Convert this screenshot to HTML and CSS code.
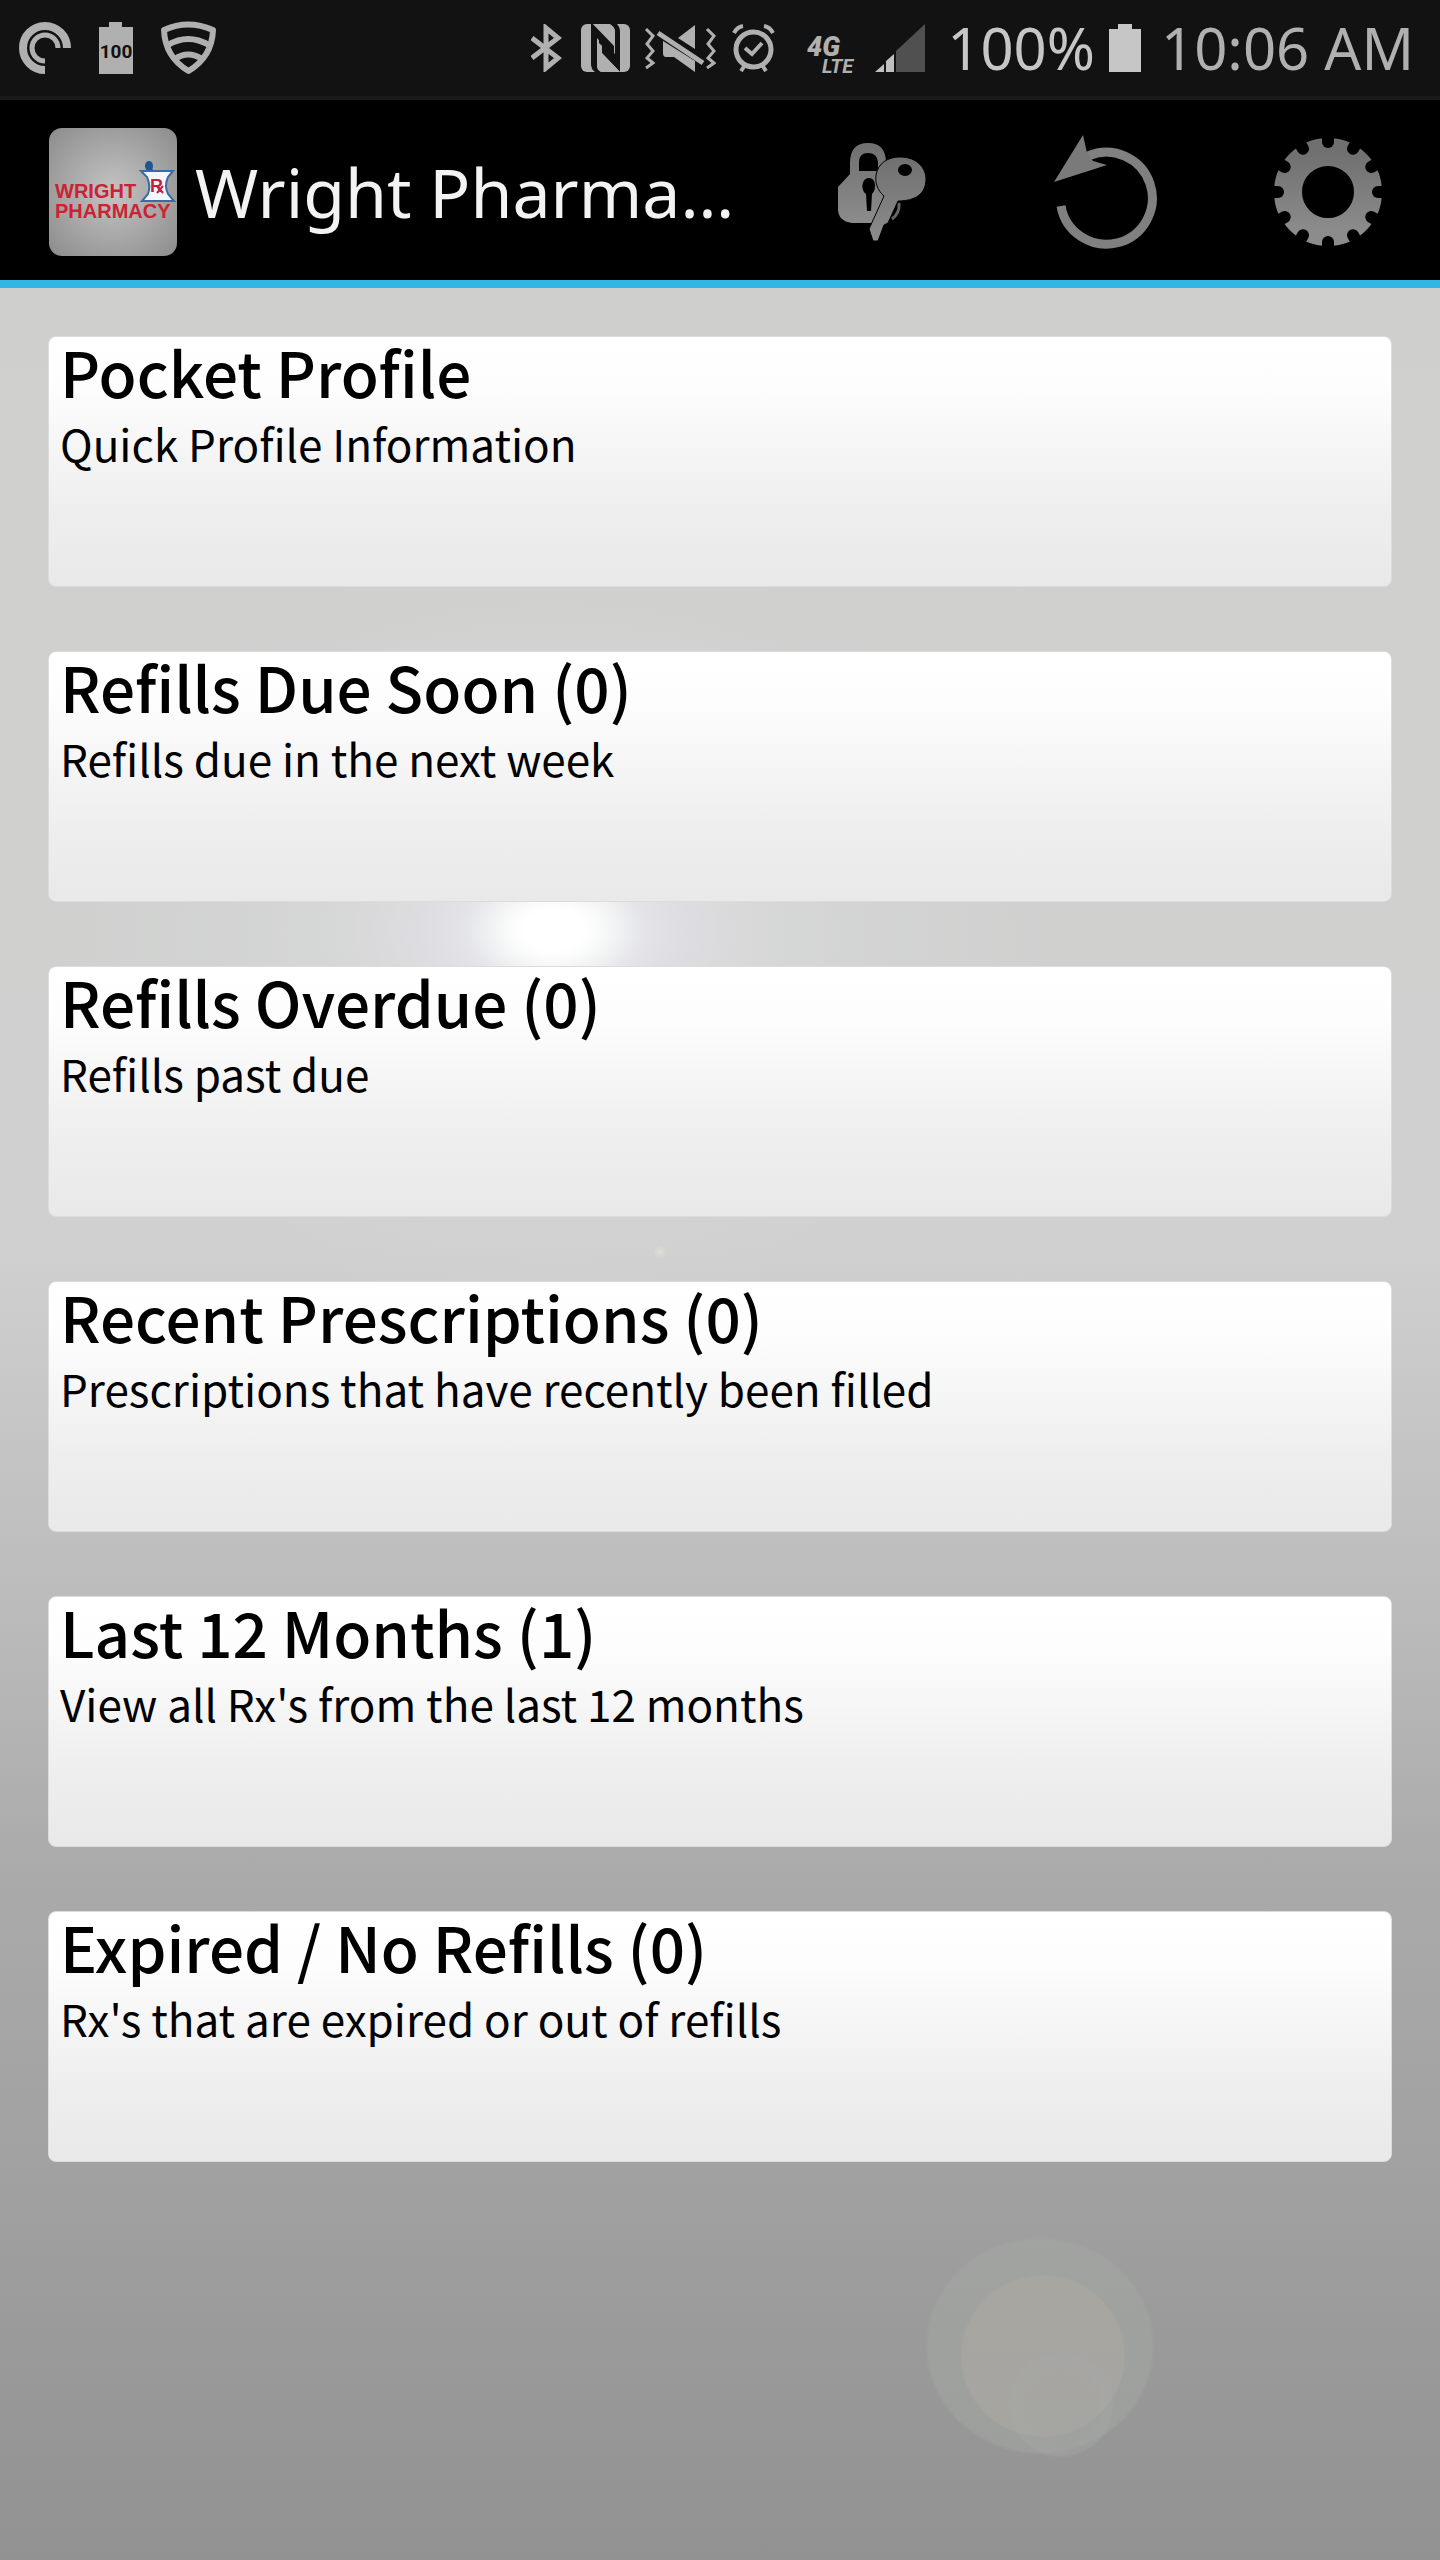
FILE: index.html
```html
<!DOCTYPE html>
<html lang="en">
<head>
  <meta charset="UTF-8">
  <meta name="viewport" content="width=device-width, initial-scale=1">
  <title>Wright Pharmacy</title>
  <link rel="stylesheet" href="styles.css">
</head>

<body>
  <div class="status-bar">
    <div class="notifications">
      <svg class="icon-casts" width="52" height="52" viewBox="0 0 52 52" fill="none" stroke="#b0b0b0">
        <path d="M26 48A22 22 0 1 1 48 26" stroke-width="8"/>
        <path d="M26 39A13 13 0 1 1 39 26" stroke-width="5"/>
      </svg>
      <svg class="icon-full" width="34" height="52" viewBox="0 0 34 52" fill="#b0b0b0">
        <path d="M10 0h13v5h11v47H0V5h10z"/>
        <text x="17" y="36" text-anchor="middle" class="battery-text">100</text>
      </svg>
      <svg width="55" height="54" viewBox="0 0 55 54" fill="none" stroke="#b0b0b0" stroke-width="6" stroke-linejoin="round">
        <path d="M3 9Q27 -2 52 9Q51 36 27.500 50Q4 36 3 9z"/>
        <path d="M7 24Q27 12 48 24M14 38Q27 29 41 38"/>
      </svg>
    </div>
    <div class="system">
      <svg width="32" height="48" viewBox="0 0 32 48" fill="none" stroke="#b0b0b0" stroke-width="5">
        <path d="M1 14L27 34L15 44V4L27 14L1 34"/>
      </svg>
      <svg class="icon-nfc" width="49" height="48" viewBox="0 0 49 48">
        <rect width="49" height="48" rx="6" fill="#b0b0b0"/>
        <path d="M12 0L34 22V8Q34 3 29 0H36Q39 3 39 8V48L16 24V41Q16 46 20 48H14Q10 45 10 40V0z" fill="#121212"/>
        <path d="M16 14L34 32V8Q34 3 28 0H12L33 22V32L16 14z" fill="#b0b0b0"/>
        <path d="M16 14V41Q16 48 22 48H39L21 29V20z" fill="#b0b0b0"/>
        <path d="M18 14L34 30V34L18 19z" fill="#121212"/>
      </svg>
      <svg class="icon-mute" width="72" height="48" viewBox="0 0 72 48" fill="#b0b0b0">
        <path d="M34 14L51 1V25zM19 17L51 37V48L30 33H22Q19 33 19 29z"/>
        <path d="M14 9L59 39" stroke="#b0b0b0" stroke-width="5"/>
        <path d="M2 5L9 12L3 20L9 27L3 34L9 39L2 44M63 5L70 12L64 20L70 27L64 34L70 39L63 44" fill="none" stroke="#b0b0b0" stroke-width="3"/>
      </svg>
      <svg class="icon-alarm" width="43" height="48" viewBox="0 0 43 48" fill="none" stroke="#b0b0b0">
        <circle cx="21.500" cy="25.500" r="17.500" stroke-width="5"/>
        <path d="M13 24L20 30L30 19" stroke-width="4"/>
        <path d="M2 9Q5 3 11 2M41 9Q38 3 32 2M13 41L9 47M30 41L34 47" stroke-width="4"/>
      </svg>
      <svg class="icon-lte" width="48" height="48" viewBox="0 0 48 48" fill="#b0b0b0">
        <text x="0" y="32" class="net-gen">4G</text>
        <text x="15" y="49" class="net-type">LTE</text>
      </svg>
      <svg class="icon-signal" width="50" height="48" viewBox="0 0 50 48">
        <path d="M21 27L50 0V48H21z" fill="#505050"/>
        <path d="M0 48L9 40V48zM11 37L19 30V48H11z" fill="#c0c0c0"/>
      </svg>
      <span class="percent">100%</span>
      <svg class="icon-battery" width="32" height="48" viewBox="0 0 32 48" fill="#c6c6c6">
        <path d="M9 0h14v5h9v43H0V5h9z"/>
      </svg>
      <time class="clock">10:06 AM</time>
    </div>
  </div>

  <header class="app-bar">
    <svg class="logo" width="128" height="128" viewBox="0 0 128 128">
      <defs>
        <radialGradient id="logo-bg" r="0.7">
          <stop offset="0" stop-color="#c4c4c4"/>
          <stop offset="1" stop-color="#8c8c8c"/>
        </radialGradient>
      </defs>
      <rect width="128" height="128" rx="13" fill="url(#logo-bg)"/>
      <text x="6" y="70" class="logo-text">WRIGHT</text>
      <text x="6" y="90" class="logo-text">PHARMACY</text>
      <ellipse cx="100" cy="38" rx="4" ry="5" fill="#1f5590"/>
      <path d="M101 42L103 45" stroke="#1f5590" stroke-width="5"/>
      <path d="M92 43H124L119 49Q115 58 119 66L125 73H93L99 66Q102 58 98 49z" fill="#f2f7fd" stroke="#3a6ba8" stroke-width="2"/>
      <text x="101" y="64" class="logo-rx">R</text>
      <path d="M108 58L114 65M114 58L108 65" stroke="#c8203a" stroke-width="2"/>
    </svg>
    <h1>Wright Pharma…</h1>
    <div class="actions">
      <svg width="0" height="0" class="defs">
        <linearGradient id="metal" x1="0" y1="0" x2="0" y2="1">
          <stop offset="0" stop-color="#707070"/>
          <stop offset="1" stop-color="#8c8c8c"/>
        </linearGradient>
      </svg>
      <button type="button" aria-label="Lock">
        <svg width="100" height="98" viewBox="0 0 100 98">
          <path d="M12 31V20Q12 0 30 0Q48 0 48 20V40L54 46L36 80H14Q0 78 0 66V44L12 31zM21 28H40V19Q39 10 30 10Q21 10 21 19z" fill="url(#metal)" fill-rule="evenodd"/>
          <path d="M31 35C38 35 39 46 34 51L33 68H29L28 51C22 46 24 35 31 35z" fill="#000"/>
          <path d="M62 14C80 14 88 26 88 36C88 51 77 58 60 58L50 80L46 82L40 98H35L31 86L46 53C39 47 37 39 38 32C40 20 50 14 62 14z" fill="url(#metal)" stroke="#000" stroke-width="1"/>
          <ellipse cx="67" cy="27" rx="7" ry="6" fill="#000"/>
          <path d="M61 60Q62 70 54 76" fill="none" stroke="#666" stroke-width="3"/>
        </svg>
      </button>
      <button type="button" aria-label="Refresh">
        <svg width="104" height="114" viewBox="0 0 104 114">
          <path d="M7 71A46 46 0 1 0 34 21" fill="none" stroke="#808080" stroke-width="9"/>
          <path d="M29 0L33 18L39 26L53 30L0 47z" fill="#7a7a7a"/>
        </svg>
      </button>
      <button type="button" aria-label="Settings">
        <svg width="108" height="108" viewBox="0 0 108 108">
          <circle cx="54" cy="54" r="40" fill="none" stroke="url(#metal)" stroke-width="28"/>
          <g stroke="#000" stroke-width="12" stroke-linecap="round">
            <path id="notch" d="M54 -4V4"/>
            <use href="#notch" transform="rotate(30 54 54)"/>
            <use href="#notch" transform="rotate(60 54 54)"/>
            <use href="#notch" transform="rotate(90 54 54)"/>
            <use href="#notch" transform="rotate(120 54 54)"/>
            <use href="#notch" transform="rotate(150 54 54)"/>
            <use href="#notch" transform="rotate(180 54 54)"/>
            <use href="#notch" transform="rotate(210 54 54)"/>
            <use href="#notch" transform="rotate(240 54 54)"/>
            <use href="#notch" transform="rotate(270 54 54)"/>
            <use href="#notch" transform="rotate(300 54 54)"/>
            <use href="#notch" transform="rotate(330 54 54)"/>
          </g>
        </svg>
      </button>
    </div>
  </header>

  <main class="menu">
    <button type="button" class="card">
      <span class="card-title">Pocket Profile</span>
      <span class="card-text">Quick Profile Information</span>
    </button>
    <button type="button" class="card">
      <span class="card-title">Refills Due Soon (0)</span>
      <span class="card-text">Refills due in the next week</span>
    </button>
    <button type="button" class="card">
      <span class="card-title">Refills Overdue (0)</span>
      <span class="card-text">Refills past due</span>
    </button>
    <button type="button" class="card">
      <span class="card-title">Recent Prescriptions (0)</span>
      <span class="card-text">Prescriptions that have recently been filled</span>
    </button>
    <button type="button" class="card">
      <span class="card-title">Last 12 Months (1)</span>
      <span class="card-text">View all Rx's from the last 12 months</span>
    </button>
    <button type="button" class="card">
      <span class="card-title">Expired / No Refills (0)</span>
      <span class="card-text">Rx's that are expired or out of refills</span>
    </button>
  </main>
</body>
</html>
```
FILE: styles.css
```css
* {
  box-sizing: border-box;
}
body {
  margin: 0;
  min-height: 100vh;
  display: flex;
  flex-direction: column;
  font-family: 'Noto Sans', 'Open Sans', sans-serif;
  background: #999;
}
button {
  font: inherit;
  border: none;
  padding: 0;
  background: none;
  cursor: pointer;
}
svg {
  display: block;
  flex: none;
}

/* status bar */
.status-bar {
  display: flex;
  justify-content: space-between;
  height: 100px;
  padding: 0 26px 0 19px;
  background: #121212;
  border-bottom: 4px solid #1a1a1a;
}
.notifications,
.system {
  display: flex;
  align-items: center;
}
.notifications {
  gap: 28px;
}
.battery-text {
  font: bold 19px Roboto, sans-serif;
  fill: #121212;
}
.system {
  font-size: 58px;
  line-height: 96px;
  white-space: nowrap;
}
.icon-nfc {
  margin-left: 18px;
}
.icon-mute {
  margin-left: 14px;
}
.icon-alarm {
  margin-left: 16px;
}
.icon-lte {
  margin-left: 32px;
  overflow: visible;
}
.net-gen {
  font: italic 900 27px Roboto, sans-serif;
}
.net-type {
  font: italic bold 20px Roboto, sans-serif;
}
.icon-signal {
  margin-left: 20px;
}
.percent {
  margin-left: 22px;
  color: #c6c6c6;
}
.icon-battery {
  margin-left: 14px;
}
.clock {
  margin-left: 20px;
  color: #b0b0b0;
}

/* app bar */
.app-bar {
  display: flex;
  align-items: center;
  height: 188px;
  padding: 4px 58px 0 49px;
  background: #000;
  border-bottom: 8px solid #33b5e5;
}
.logo-text {
  font: bold 20px 'Liberation Sans', sans-serif;
  fill: #cc2233;
}
.logo-rx {
  font: bold 18px 'Liberation Sans', sans-serif;
  fill: #c8203a;
}
h1 {
  margin: 0 auto 0 18px;
  white-space: nowrap;
  font-size: 68px;
  font-weight: 400;
  line-height: 96px;
  color: #f3f3f3;
}
.actions {
  display: flex;
  align-items: center;
  gap: 116px;
}
.defs {
  position: absolute;
}

/* menu */
.menu {
  flex: 1;
  display: flex;
  flex-direction: column;
  gap: 64px;
  padding: 48px;
  background:
    radial-gradient(circle at 1061px 2117px, rgba(164, 166, 164, 0.3) 36px, rgba(166, 168, 168, 0.4) 50px, transparent 53px),
    radial-gradient(83px 82px at 1043px 2068px, rgba(172, 168, 162, 0.6) 97%, transparent 100%),
    radial-gradient(115px 109px at 1040px 2058px, rgba(162, 168, 162, 0.5) 97%, transparent 100%),
    radial-gradient(circle at 660px 964px, rgba(235, 230, 216, 0.6), transparent 7px),
    radial-gradient(300px 200px at 554px 642px, #fff 10%, rgba(250, 252, 251, 0.9) 17%, rgba(232, 232, 238, 0.75) 30%, rgba(226, 224, 230, 0.6) 45%, rgba(220, 220, 220, 0.3) 70%, transparent 100%),
    radial-gradient(500px 380px at 554px 642px, rgba(218, 220, 220, 0.8), transparent),
    linear-gradient(#cfcfcd 0, #d0d0d0 900px, #d0d0d0 960px, #bebebe 1270px, #aaaaaa 1590px, #a1a1a1 1890px, #959595 2180px, #929292 2272px);
}
.card {
  display: flex;
  flex-direction: column;
  align-items: flex-start;
  height: 251px;
  padding: 0 11px;
  text-align: left;
  font-family: 'Noto Sans CJK SC', 'Noto Sans', sans-serif;
  color: #000;
  border: 1px solid #dcdcdc;
  border-radius: 8px;
  background: linear-gradient(#fff 0%, #fdfdfd 20%, #eeeeee 70%, #e9e9e9 100%);
}
.card-title {
  font-size: 62px;
  font-weight: 500;
  line-height: 68px;
}
.card-text {
  font-size: 44px;
  line-height: 76px;
}
```
